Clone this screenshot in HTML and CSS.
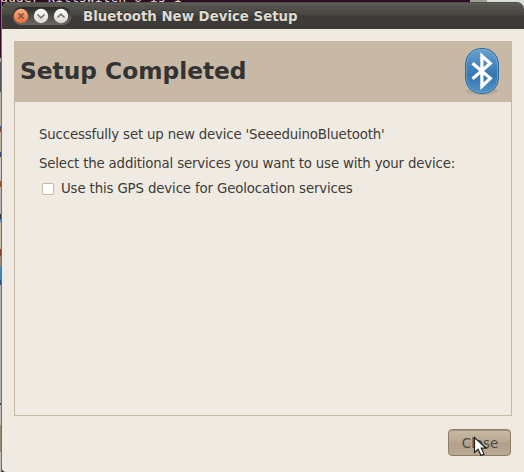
FILE: index.html
```html
<!DOCTYPE html>
<html lang="en">
<head>
<meta charset="utf-8">
<title>Bluetooth New Device Setup</title>
<link rel="stylesheet" href="styles.css">
</head>
<body>
<div class="desktop">
  <div class="terminal">uuder'killswitch 0 is 1</div>
  <div class="edge"></div>
  <main class="window">
    <header class="titlebar">
      <svg class="controls" width="62" height="20" viewBox="0 0 62 20">
        <defs>
          <linearGradient id="tray" x1="0" y1="0" x2="0" y2="1"><stop offset="0" stop-color="#2b2b28"/><stop offset="1" stop-color="#6c6b65"/></linearGradient>
          <linearGradient id="silver" x1="0" y1="0" x2="0" y2="1"><stop offset="0" stop-color="#fffefa"/><stop offset="1" stop-color="#d8d5cc"/></linearGradient>
          <linearGradient id="orange" x1="0" y1="0" x2="0" y2="1"><stop offset="0" stop-color="#ffae86"/><stop offset="1" stop-color="#ed6b35"/></linearGradient>
        </defs>
        <rect x="1" y="1" width="60" height="18" rx="9" fill="url(#tray)"/>
        <circle cx="10" cy="10" r="7.2" fill="url(#orange)"/>
        <path d="M7.4 7.4l5.2 5.2m0-5.2l-5.2 5.2" stroke="#80604c" stroke-width="1.9"/>
        <circle cx="30" cy="10" r="7.2" fill="url(#silver)"/>
        <path d="M26.5 8.5l3.5 3.3 3.5-3.3" fill="none" stroke="#77766e" stroke-width="1.7"/>
        <circle cx="50" cy="10" r="7.2" fill="url(#silver)"/>
        <path d="M46.5 11.5L50 8.2l3.5 3.3" fill="none" stroke="#77766e" stroke-width="1.7"/>
      </svg>
      <span class="title">Bluetooth New Device Setup</span>
    </header>
    <section class="assistant">
      <div class="banner">
        <h1>Setup Completed</h1>
        <svg class="logo" width="38" height="50" viewBox="0 0 38 50">
          <defs>
            <linearGradient id="blue" x1="0" y1="0" x2="0" y2="1"><stop offset="0" stop-color="#69a3d0"/><stop offset=".45" stop-color="#427fb9"/><stop offset=".6" stop-color="#3775b2"/><stop offset="1" stop-color="#4f95c6"/></linearGradient>
          </defs>
          <ellipse cx="19" cy="45" rx="16" ry="4" fill="#8d8170" opacity=".3"/>
          <rect x="2.5" y="2.5" width="33" height="45" rx="15.5" fill="url(#blue)" stroke="#2d6aa4"/>
          <rect x="3.5" y="3.5" width="31" height="43" rx="14.5" fill="none" stroke="#8bb9dc" stroke-opacity=".5"/>
          <path d="M9.5 17.2L27.3 32.3 18.9 40.2V9.8L27.3 17.5 9.5 32.7" fill="none" stroke="#fff" stroke-width="3.2"/>
        </svg>
      </div>
      <div class="content">
        <p class="success">Successfully set up new device 'SeeeduinoBluetooth'</p>
        <p class="prompt">Select the additional services you want to use with your device:</p>
        <label class="option"><span class="checkbox"></span><span class="option-text">Use this GPS device for Geolocation services</span></label>
      </div>
    </section>
    <footer class="actions">
      <button class="close">Close</button>
      <svg class="cursor" width="16" height="22" viewBox="0 0 16 22"><path d="M1.5 1.5v15l3.6-3.3 2.9 6.3 3-1.4-2.8-5.9h5z" fill="#fff" stroke="#222" stroke-width="1.2"/></svg>
    </footer>
  </main>
</div>
</body>
</html>
```
FILE: styles.css
```css
* { box-sizing: border-box; }
body { margin: 0; font-family: "DejaVu Sans", sans-serif; font-size: 13.33px; color: #3c3b37; }
.desktop { width: 524px; height: 472px; overflow: hidden; position: relative; display: grid; grid-template-columns: 2px 522px; background: linear-gradient(90deg, #310c26 0 470px, #9d9c92 470px 487px, #d9dfdb 487px); }
.terminal { position: absolute; left: 0; top: -10px; color: #ddd; font: 13.1px/16px "DejaVu Sans Mono", monospace; white-space: pre; }
.edge { height: 472px; border-right: 1px solid #77705f; background: linear-gradient(#310c26 0 58px, #aaa69c 58px 62px, #55545a 62px 92px, #b9b3a9 92px 126px, #375b84 126px 129px, #a04b35 129px 132px, #bbb5aa 132px 152px, #38516e 152px 157px, #ccc8bf 157px 181px, #a7482e 181px 187px, #bcb7ae 187px 214px, #343742 214px 219px, #5688b6 219px 222px, #c7c0b4 222px 249px, #883f2f 249px 256px, #9b8d7b 256px 266px, #4889bd 266px 280px, #294c83 280px 285px, #b5b2aa 285px 403px, #38536b 403px 405px, #c0bbb3 405px 425px, #998b77 425px 452px, #bfc2b9 452px); }
.window { position: relative; display: flex; flex-direction: column; height: 470px; margin-top: 2px; background: #f0ebe2; border-radius: 7px 7px 0 4px; overflow: hidden; }
.titlebar { height: 27px; flex: none; display: flex; align-items: center; padding: 0 0 0 9px; background: linear-gradient(#64625a 0, #55544e 2px, #474641 12px, #3c3b37 13px, #3c3b37); border-top: 1px solid #4b4a45; }
.controls { flex: none; display: block; }
.title { margin-left: 10px; font-size: 13.33px; font-weight: bold; color: #dfdbd2; text-shadow: 0 -1px #2b2a27; white-space: nowrap; }
.assistant { margin: 12px 0 0 12px; width: 498px; height: 375px; flex: none; border: 1px solid #c7b9a5; }
.banner { height: 60px; padding: 0 10px 2px 5px; display: flex; align-items: center; justify-content: space-between; background: #c7b9a5; }
h1 { margin: 0; font-size: 23.3px; line-height: 30px; color: #333; white-space: nowrap; }
.content { padding: 23px 24px; letter-spacing: -.17px; }
p { margin: 0; height: 20px; line-height: 20px; white-space: nowrap; }
.prompt { margin-top: 9px; }
.option { display: flex; align-items: center; height: 20px; margin-top: 4px; white-space: nowrap; }
.option-text { letter-spacing: -.14px; }
.checkbox { width: 12px; height: 12px; margin: 1px 7px 0 3px; border: 1px solid #c7b9a5; border-radius: 2px; background: #fff; }
.actions { position: relative; display: flex; justify-content: flex-end; padding: 13px 13px 0 0; }
.close { width: 63px; height: 27px; padding: 1px 0 0 1px; font: 13.33px "DejaVu Sans", sans-serif; color: #4b4a47; border: 1px solid #8d7d68; border-radius: 4px; background: linear-gradient(#c9bba7, #b8a892 48%, #b1a089 52%, #b9a993); box-shadow: inset 0 1px #a59681; }
.cursor { position: absolute; left: 471px; top: 20px; }
```
